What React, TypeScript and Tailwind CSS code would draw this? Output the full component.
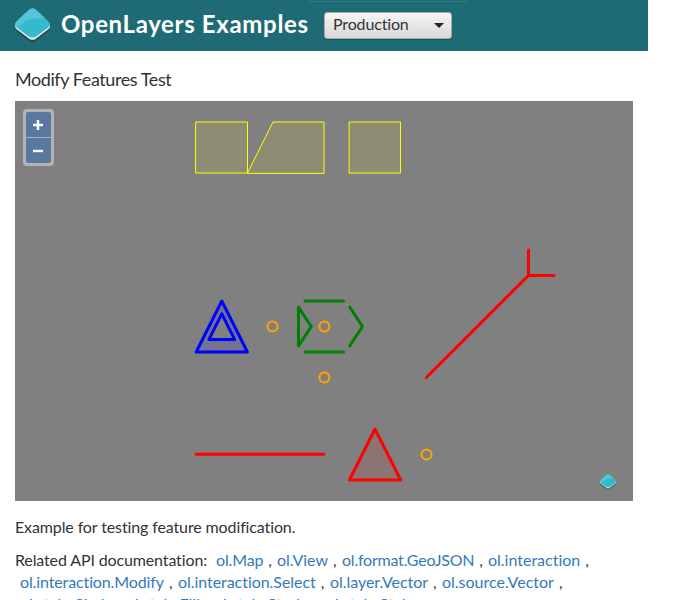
import React from "react";

type TextProps = { children: React.ReactNode; className?: string };

const links1: [string, string][] = [
  ["ol.Map", "w-[61px] tracking-[-0.15px]"],
  ["ol.View", "w-[65px]"],
  ["ol.format.GeoJSON", "w-[146px] tracking-[-0.22px]"],
  ["ol.interaction", "w-[110px]"],
];
const links2: [string, string][] = [
  ["ol.interaction.Modify", "w-[158px] tracking-[-0.12px]"],
  ["ol.interaction.Select", "w-[152px] tracking-[-0.05px]"],
  ["ol.layer.Vector", "w-[112px] tracking-[-0.05px]"],
  ["ol.source.Vector", "w-[130px]"],
];
const links3: [string, string][] = [
  ["ol.style.Circle", "w-[106px]"],
  ["ol.style.Fill", "w-[88px]"],
  ["ol.style.Stroke", "w-[112px]"],
  ["ol.style.Style", "w-[110px]"],
];

function Logo({ className }: { className: string }) {
  return (
    <svg className={className} viewBox="0 0 36 36">
      <path d="M0.3 18 L0.3 21 Q0.3 22.5 2.5 24.5 L14.5 34 Q18 37 21.5 34 L33.5 24.5 Q35.7 22.5 35.7 21 L35.7 18Z" fill="#17505a" />
      <path d="M0 17 L0 19 Q0 20.5 2 22.2 L14.5 31.5 Q18 34 21.5 31.5 L34 22.2 Q36 20.5 36 19 L36 17Z" fill="#e5e4ea" />
      <path d="M1.8 13.5 L13 3 Q18 -2.4 23 3 L34.2 13.5 Q37.8 17 34.2 20 L22.5 28.8 Q18 32 13.5 28.8 L1.8 20 Q-1.8 17 1.8 13.5Z" fill="#34bace" />
      <path d="M1.8 13.5 L13 3 Q18 -2.4 23 3 L31 10.5 Q12 8.5 3 20.8 L1.8 20 Q-1.8 17 1.8 13.5Z" fill="#54c5d6" />
    </svg>
  );
}

function Links({ items }: { items: [string, string][] }) {
  return (
    <>
      {items.map(([name, width]) => (
        <span key={name} className={"flex shrink-0 " + width}>
          <a className="text-[#337ab7]">{name}</a>
          <span className="ml-[5px]">,</span>
        </span>
      ))}
    </>
  );
}

function Label({ children, className = "" }: TextProps) {
  return <span className={"whitespace-nowrap " + className}>{children}</span>;
}

export default function App() {
  return (
    <div className="h-[600px] w-[700px] overflow-hidden bg-white font-['Lato',sans-serif] text-base leading-[22px] text-[#333] [font-variant-ligatures:none]">
      <header className="relative flex h-[51px] w-[648px] bg-[#1f6b75] pl-[15px]">
        <div className="absolute left-[308px] top-[1px] h-px w-[160px] bg-[#337a84]" />
        <Logo className="mt-2 h-[35px] w-[35px]" />
        <Label className="ml-[11px] mt-[7px] w-[248px] text-[24px] font-bold leading-[34px] tracking-[0.66px] text-white">OpenLayers Examples</Label>
        <button className="ml-[15px] mt-3 flex h-[27px] w-[128px] items-center justify-between rounded-[3px] border border-[#aaa] bg-linear-to-b from-[#f5f5f5] to-[#d8d8d8] pb-[3px] pl-2 pr-[7px] shadow-[0_1px_1px_#174f57]">
          <Label className="tracking-[-0.15px]">Production</Label>
          <svg className="mt-[2px] h-[5px] w-[10px]" viewBox="0 0 10 5"><path d="M0 0H10L5 5Z" fill="#222" /></svg>
        </button>
      </header>
      <main className="pl-[15px]">
        <h1 className="flex h-[50px] pt-[17px] text-[18px] tracking-[-0.42px]"><Label>Modify Features Test</Label></h1>
        <div className="relative h-[400px] w-[618px] bg-[#808080]">
          <svg className="h-[400px] w-[618px]" viewBox="15 101 618 400" fill="none" strokeLinecap="round" strokeLinejoin="round">
            <g stroke="#ff0" strokeWidth="1" fill="#ff0" fillOpacity=".1">
              <path d="M196 122H247.5V173H196Z" />
              <path d="M247.5 173L273 122H324V173Z" />
              <path d="M349.5 122H400.5V173H349.5Z" />
            </g>
            <g stroke="#00f" strokeWidth="3">
              <path d="M221.8 301L247.4 352H196.2Z M221.8 313.8L209 339.4H234.6Z" fill="#00f" fillOpacity=".1" fillRule="evenodd" />
            </g>
            <g stroke="green" strokeWidth="3">
              <path d="M305 301H343.5M305 352H343.5M349.7 307.2L362.5 326.5L349.7 345.8M298.5 307.2V345.8L311.3 326.5Z" />
            </g>
            <g stroke="red" strokeWidth="3">
              <path d="M426.4 377.5L528.5 275.5V250M528.5 275.5H554M196 454.2H324" />
              <path d="M375 429L400.7 480H349.4Z" fill="red" fillOpacity=".1" />
            </g>
            <g stroke="orange" strokeWidth="2">
              <circle cx="272.5" cy="326.5" r="5" />
              <circle cx="324.4" cy="326.5" r="5" />
              <circle cx="324.4" cy="377.5" r="5" />
              <circle cx="426.5" cy="454.5" r="5" />
            </g>
          </svg>
          <div className="absolute left-2 top-2 flex h-[57px] w-[31px] flex-col gap-px rounded-[4px] bg-[#b3b3b3] p-[3px]">
            <div className="flex h-[25px] items-center justify-center rounded-t-[2px] bg-[#5a789f] pr-px">
              <svg className="h-[10px] w-[10px]" viewBox="0 0 10 10"><path d="M0 5H10M5 0V10" stroke="white" strokeWidth="2.4" /></svg>
            </div>
            <div className="flex h-[25px] items-center justify-center rounded-b-[2px] bg-[#5a789f] pr-px">
              <svg className="h-[10px] w-[10px]" viewBox="0 0 10 10"><path d="M0 5H10" stroke="white" strokeWidth="2.4" /></svg>
            </div>
          </div>
          <Logo className="absolute left-[585px] top-[373px] h-4 w-4" />
        </div>
        <p className="mt-[15px] flex h-[33px] tracking-[-0.12px]"><Label>Example for testing feature modification.</Label></p>
        <div className="whitespace-nowrap">
          <div className="flex"><Label className="w-[201px] tracking-[-0.13px]">Related API documentation:</Label><Links items={links1} /></div>
          <div className="flex pl-[5px]"><Links items={links2} /></div>
          <div className="flex pl-[5px]"><Links items={links3} /></div>
        </div>
      </main>
    </div>
  );
}
